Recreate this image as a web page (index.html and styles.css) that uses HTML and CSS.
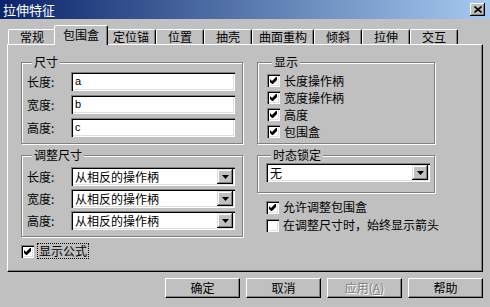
FILE: index.html
```html
<!DOCTYPE html>
<html lang="zh-CN">
<head>
  <meta charset="UTF-8">
  <title>拉伸特征</title>
  <link rel="stylesheet" href="styles.css">
</head>
<body>
  <div class="titlebar">
    <span class="title">拉伸特征</span>
    <span class="close">
      <svg width="8" height="7" viewBox="0 0 8 7"><path d="M0.5 0.5 L7.5 6.5 M7.5 0.5 L0.5 6.5" stroke="#000" stroke-width="1.7"/></svg>
    </span>
  </div>

  <div class="tabs">
    <div class="tab">常规</div>
    <div class="tab active">包围盒</div>
    <div class="tab">定位锚</div>
    <div class="tab">位置</div>
    <div class="tab">抽壳</div>
    <div class="tab">曲面重构</div>
    <div class="tab">倾斜</div>
    <div class="tab">拉伸</div>
    <div class="tab">交互</div>
  </div>

  <div class="page">
    <div class="col">
      <fieldset class="group size">
        <legend>尺寸</legend>
        <div class="field"><span class="lbl">长度:</span><div class="text">a</div></div>
        <div class="field"><span class="lbl">宽度:</span><div class="text">b</div></div>
        <div class="field"><span class="lbl">高度:</span><div class="text">c</div></div>
      </fieldset>

      <fieldset class="group resize">
        <legend>调整尺寸</legend>
        <div class="field"><span class="lbl">长度:</span>
          <div class="select"><span class="value">从相反的操作柄</span><span class="arrow"><svg width="7" height="4" viewBox="0 0 7 4"><polygon points="0,0 7,0 3.5,4" fill="#000"/></svg></span></div>
        </div>
        <div class="field"><span class="lbl">宽度:</span>
          <div class="select"><span class="value">从相反的操作柄</span><span class="arrow"><svg width="7" height="4" viewBox="0 0 7 4"><polygon points="0,0 7,0 3.5,4" fill="#000"/></svg></span></div>
        </div>
        <div class="field"><span class="lbl">高度:</span>
          <div class="select"><span class="value">从相反的操作柄</span><span class="arrow"><svg width="7" height="4" viewBox="0 0 7 4"><polygon points="0,0 7,0 3.5,4" fill="#000"/></svg></span></div>
        </div>
      </fieldset>

      <div class="check formula">
        <span class="box"><svg width="7" height="7" viewBox="0 0 7 7"><polygon points="0,2 2,4 6,0 7,0 7,3 3,7 2,7 0,5" fill="#000"/></svg></span>
        <span class="focus">显示公式</span>
      </div>
    </div>

    <div class="col">
      <fieldset class="group show">
        <legend>显示</legend>
        <div class="check"><span class="box"><svg width="7" height="7" viewBox="0 0 7 7"><polygon points="0,2 2,4 6,0 7,0 7,3 3,7 2,7 0,5" fill="#000"/></svg></span>长度操作柄</div>
        <div class="check"><span class="box"><svg width="7" height="7" viewBox="0 0 7 7"><polygon points="0,2 2,4 6,0 7,0 7,3 3,7 2,7 0,5" fill="#000"/></svg></span>宽度操作柄</div>
        <div class="check"><span class="box"><svg width="7" height="7" viewBox="0 0 7 7"><polygon points="0,2 2,4 6,0 7,0 7,3 3,7 2,7 0,5" fill="#000"/></svg></span>高度</div>
        <div class="check"><span class="box"><svg width="7" height="7" viewBox="0 0 7 7"><polygon points="0,2 2,4 6,0 7,0 7,3 3,7 2,7 0,5" fill="#000"/></svg></span>包围盒</div>
      </fieldset>

      <fieldset class="group lock">
        <legend>时态锁定</legend>
        <div class="select"><span class="value">无</span><span class="arrow"><svg width="7" height="4" viewBox="0 0 7 4"><polygon points="0,0 7,0 3.5,4" fill="#000"/></svg></span></div>
      </fieldset>

      <div class="options">
        <div class="check"><span class="box"><svg width="7" height="7" viewBox="0 0 7 7"><polygon points="0,2 2,4 6,0 7,0 7,3 3,7 2,7 0,5" fill="#000"/></svg></span>允许调整包围盒</div>
        <div class="check"><span class="box"></span>在调整尺寸时，始终显示箭头</div>
      </div>
    </div>
  </div>

  <div class="buttons">
    <button class="btn">确定</button>
    <button class="btn">取消</button>
    <button class="btn disabled">应用(<u>A</u>)</button>
    <button class="btn">帮助</button>
  </div>
</body>
</html>
```

FILE: styles.css
```css
* {
  box-sizing: border-box;
}
body {
  margin: 0;
  width: 490px;
  height: 307px;
  overflow: hidden;
  background: #c0c0c0;
  font-family: "Noto Sans CJK SC", sans-serif;
  font-size: 12px;
  line-height: 14px;
  color: #000;
}
.titlebar {
  height: 19px;
  display: flex;
  align-items: center;
  justify-content: space-between;
  padding: 0 5px 0 3px;
  background: linear-gradient(to right, #0a246a, #a6caf0);
  color: #fff;
}
.title {
  font-size: 13px;
}
.close {
  width: 15px;
  height: 13px;
  display: flex;
  align-items: center;
  justify-content: center;
  background: #c0c0c0;
  box-shadow: inset -1px -1px #000, inset 1px 1px #fff, inset -2px -2px #808080;
}

.tabs {
  display: flex;
  align-items: flex-end;
  height: 20px;
  margin: 6px 0 -1px 8px;
  position: relative;
  z-index: 1;
}
.tab {
  min-width: 48px;
  height: 15px;
  margin-bottom: 1px;
  padding: 0 6px;
  border: 1px solid;
  border-bottom: none;
  border-color: #fff #000 transparent #fff;
  border-radius: 2px 2px 0 0;
  box-shadow: inset -1px 0 #808080;
  background: #c0c0c0;
  text-align: center;
  line-height: 14px;
}
.tab.active {
  min-width: 52px;
  height: 20px;
  margin: 0 -2px;
  padding: 0 8px;
  line-height: 18px;
  position: relative;
  z-index: 2;
}

.page {
  width: 476px;
  height: 228px;
  margin-left: 7px;
  padding: 10px 0 0 13px;
  border: 1px solid;
  border-color: #fff #000 #000 #fff;
  box-shadow: inset -1px -1px #808080;
  display: grid;
  grid-template-columns: 222px 178px;
  column-gap: 14px;
  align-items: start;
}

.group {
  margin: 0;
  min-width: 0;
  border: 1px solid #808080;
  box-shadow: inset 1px 1px #fff, 1px 1px #fff;
}
.group legend {
  margin-left: 5px;
  padding: 0 2px;
  line-height: 14px;
  background: #c0c0c0;
}
.size {
  padding: 3px 7px 6px 5px;
}
.resize {
  margin-top: 4px;
  padding: 5px 7px 6px 5px;
}
.show {
  padding: 3px 0 3px 9px;
}
.lock {
  margin-top: 4px;
  padding: 1px 4px 10px 8px;
}

.field {
  display: flex;
  align-items: center;
}
.size .field + .field {
  margin-top: 4px;
}
.resize .field + .field {
  margin-top: 3px;
}
.lbl {
  width: 44px;
}

.text {
  width: 164px;
  height: 19px;
  padding: 0 4px;
  background: #fff;
  box-shadow: inset 1px 1px #808080, inset 2px 2px #000, inset -1px -1px #fff, inset -2px -2px #dfdfdf;
  font-family: "Liberation Sans", sans-serif;
  font-size: 11px;
  line-height: 19px;
}
.select {
  width: 164px;
  height: 19px;
  padding: 2px;
  display: flex;
  background: #fff;
  box-shadow: inset 1px 1px #808080, inset 2px 2px #000, inset -1px -1px #fff, inset -2px -2px #dfdfdf;
}
.select .value {
  flex: 1;
  padding-left: 2px;
  line-height: 15px;
}
.select .arrow {
  width: 16px;
  display: flex;
  align-items: center;
  justify-content: center;
  background: #c0c0c0;
  box-shadow: inset -1px -1px #000, inset 1px 1px #dfdfdf, inset -2px -2px #808080, inset 2px 2px #fff;
}

.check {
  display: flex;
  align-items: center;
  gap: 4px;
  height: 17px;
  white-space: nowrap;
}
.box {
  flex: none;
  width: 13px;
  height: 13px;
  display: flex;
  align-items: center;
  justify-content: center;
  background: #fff;
  box-shadow: inset 1px 1px #808080, inset 2px 2px #000, inset -1px -1px #fff, inset -2px -2px #dfdfdf;
}
.formula {
  margin-top: 5px;
  height: 18px;
}
.focus {
  padding: 0 1px;
  outline: 1px dotted #000;
}
.options {
  margin-top: 5px;
  padding-left: 9px;
}
.options .check {
  height: 18px;
}

.buttons {
  display: flex;
  justify-content: flex-end;
  gap: 6px;
  width: 483px;
  margin-top: 6px;
}
.btn {
  width: 75px;
  height: 20px;
  padding: 0;
  border: 1px solid;
  border-color: #fff #000 #000 #fff;
  box-shadow: inset -1px -1px #808080;
  background: #c0c0c0;
  font: inherit;
  color: #000;
}
.btn.disabled {
  color: #808080;
  text-shadow: 1px 1px #fff;
}
```
